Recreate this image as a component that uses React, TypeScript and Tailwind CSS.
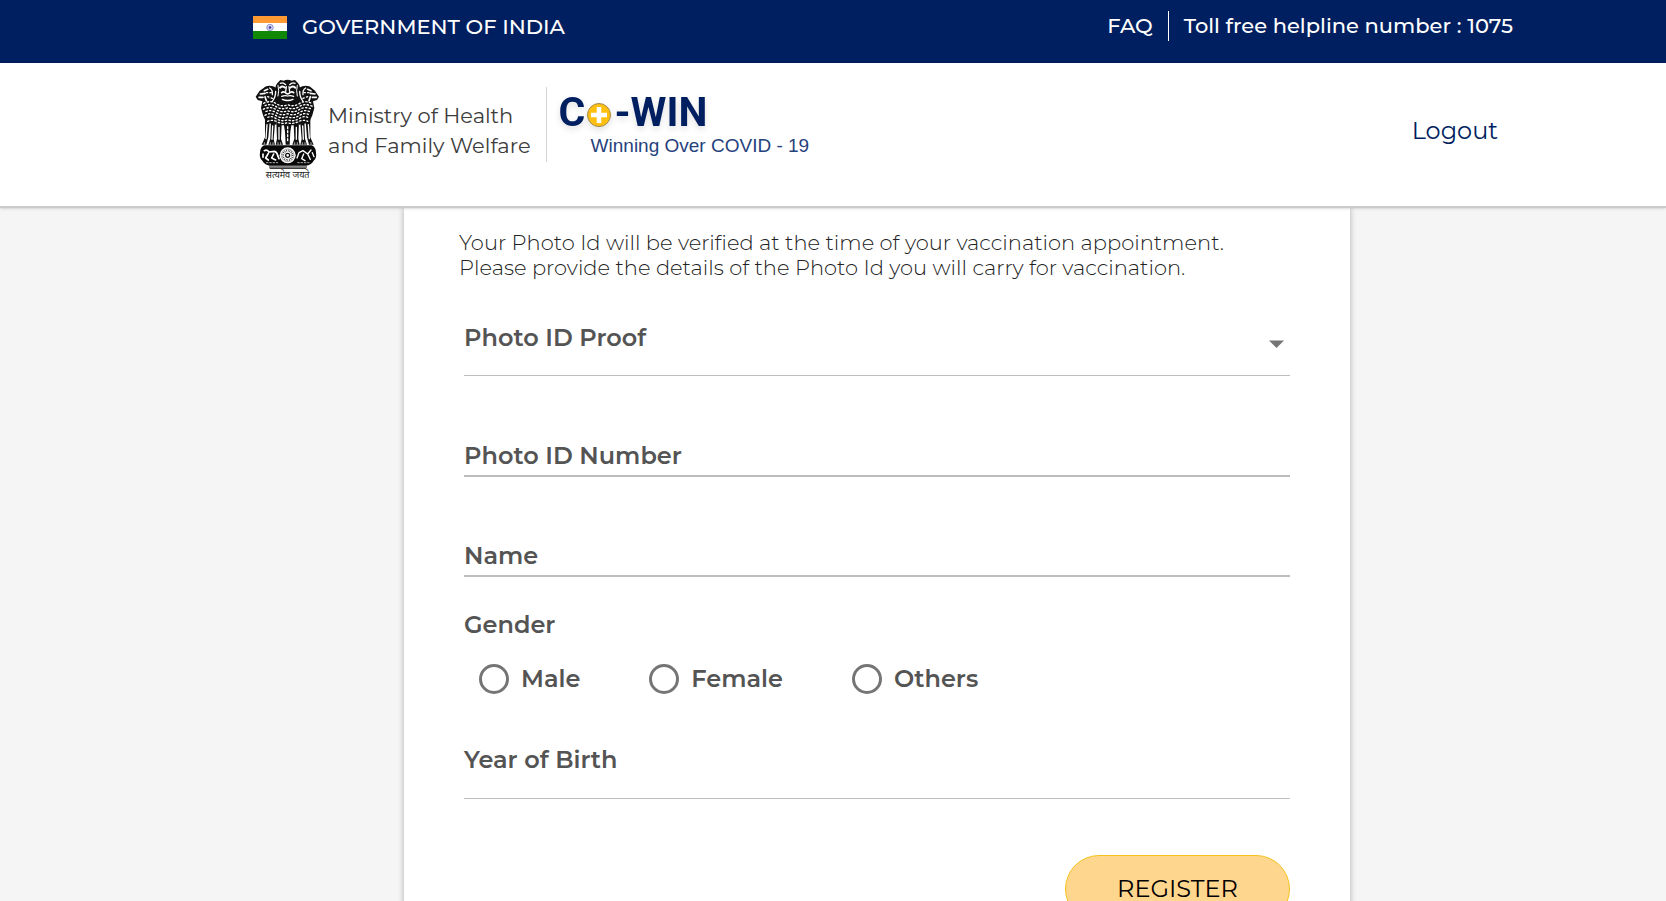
import { useState } from 'react'

const GENDERS = ['Male', 'Female', 'Others']

function IndiaFlag() {
  return (
    <svg width="34" height="23" viewBox="0 0 34 23" role="img" aria-label="India flag">
      <rect width="34" height="8" fill="#ff9933" />
      <rect y="7" width="34" height="9" fill="#fff" />
      <rect y="15" width="34" height="8" fill="#128807" />
      <circle cx="17" cy="11.5" r="3.6" fill="#d3d3f0" />
      <circle cx="17" cy="11.5" r="3.2" fill="none" stroke="#8888c8" strokeWidth="0.8" />
      <circle cx="17" cy="11.5" r="1.3" fill="#3a3aa0" />
    </svg>
  )
}

function Emblem() {
  return (
    <svg width="64" height="104" viewBox="28 25 192 312" role="img" aria-label="State emblem of India">
      {/* side lions */}
      <path
        d="M92 52 C78 42 62 44 54 52 L42 60 L30 78 L36 88 L50 92 L46 112 L52 134 L62 156 L92 162 L98 120 Z M160 52 C174 42 190 44 198 52 L208 60 L220 78 L214 88 L202 92 L206 112 L200 134 L190 156 L160 162 L154 120 Z"
        fill="#111"
      />
      {/* central lion */}
      <path
        d="M96 36 L104 28 L114 30 Q126 24 138 30 L148 28 L156 36 Q166 46 162 60 L160 82 Q176 100 170 130 L154 164 L98 164 L82 130 Q76 100 92 82 L90 60 Q86 46 96 36 Z"
        fill="#111"
      />
      {/* legs */}
      <path
        d="M58 146 L72 154 L68 200 L62 222 H48 L58 200 Z M76 152 L88 158 L84 206 L88 222 H68 L74 204 Z M92 154 L108 162 L106 204 L112 222 H90 L94 204 Z M114 158 H138 L134 184 L132 222 H120 L118 184 Z M160 154 L144 162 L146 204 L140 222 H162 L158 204 Z M176 152 L164 158 L168 206 L164 222 H184 L178 204 Z M194 146 L180 154 L184 200 L190 222 H204 L194 200 Z"
        fill="#111"
      />
      <g stroke="#fff" fill="none" strokeLinecap="round" strokeLinejoin="round">
        {/* central face */}
        <path d="M104 38 Q112 34 120 42 M148 38 Q140 34 132 42" strokeWidth="4" />
        <path d="M103 51 Q111 44 118 51 M149 51 Q141 44 134 51" strokeWidth="6" />
        <path d="M122 48 L120 62 M130 48 L132 62" strokeWidth="4" />
        <path d="M108 66 Q114 60 122 68 Q126 71 130 68 Q138 60 144 66" strokeWidth="5" />
        <path d="M108 77 Q118 73 126 76 Q134 73 144 77" strokeWidth="4" />
        <path d="M110 86 Q126 93 142 86" strokeWidth="4" />
        <path d="M97 44 L99 60 L97 76 M155 44 L153 60 L155 76" strokeWidth="3" />
        {/* side faces */}
        <path d="M56 60 L66 56 M44 70 L58 68 M40 80 H52 M58 78 L62 90 M196 60 L186 56 M208 70 L194 68 M212 80 H200 M194 78 L190 90" strokeWidth="5" />
        <path d="M72 52 Q82 58 80 72 M180 52 Q170 58 172 72" strokeWidth="4" />
        <path d="M90 62 Q90 80 80 92 M162 62 Q162 80 172 92" strokeWidth="4" />
        {/* manes */}
        <g strokeWidth="4" strokeDasharray="4 7">
          <path d="M66 78 L82 84 M186 78 L170 84 M62 66 H78 M190 66 H174" />
          <path d="M54 98 Q74 88 90 98 Q108 110 126 102 Q144 110 162 98 Q178 88 198 98" />
          <path d="M52 107 Q74 97 90 107 Q108 119 126 111 Q144 119 162 107 Q178 97 200 107" strokeDashoffset="5" />
          <path d="M53 116 Q74 106 90 116 Q108 128 126 120 Q144 128 162 116 Q178 106 199 116" />
          <path d="M55 125 Q74 115 90 125 Q108 137 126 129 Q144 137 162 125 Q178 115 197 125" strokeDashoffset="5" />
          <path d="M58 134 Q74 124 90 134 Q108 146 126 138 Q144 146 162 134 Q178 124 194 134" />
          <path d="M61 143 Q74 133 90 143 Q108 155 126 147 Q144 155 162 143 Q178 133 191 143" strokeDashoffset="5" />
          <path d="M66 152 Q78 146 92 152 Q110 162 126 156 Q142 162 160 152 Q174 146 186 152" />
        </g>
        {/* leg shading */}
        <path d="M64 162 L61 204 M81 166 L79 206 M100 170 V206 M152 170 V206 M171 166 L173 206 M188 162 L191 204" strokeWidth="4" />
        <path d="M126 168 V212" strokeWidth="4" strokeDasharray="6 6" />
        <path d="M56 216 V221 M74 216 V221 M82 216 V221 M97 216 V221 M105 216 V221 M147 216 V221 M155 216 V221 M170 216 V221 M178 216 V221 M196 216 V221" strokeWidth="2" />
      </g>
      {/* abacus */}
      <path d="M56 224 H198 Q210 228 211 246 Q214 262 204 270 Q198 282 182 285 H72 Q56 282 50 270 Q40 262 43 246 Q44 228 56 224 Z" fill="#080808" />
      <path d="M70 289 H184 M72 293 H182" stroke="#111" strokeWidth="3" />
      <circle cx="126" cy="254" r="24" fill="#fff" />
      <circle cx="126" cy="254" r="19" fill="none" stroke="#555" strokeWidth="1.5" />
      <circle cx="126" cy="254" r="14" fill="none" stroke="#222" strokeWidth="6" strokeDasharray="2 3" />
      <circle cx="126" cy="254" r="6" fill="#fff" stroke="#111" strokeWidth="4" />
      <g stroke="#fff" fill="none" strokeLinecap="round" strokeLinejoin="round">
        <path d="M56 240 Q64 236 70 244 L86 242 Q94 244 96 254 L100 264 M68 248 L60 262 L68 268 M84 250 L78 262 L90 268 M52 250 V260" strokeWidth="5" />
        <path d="M196 238 L186 250 L172 240 L160 246 L154 262 M186 250 L194 266 M174 250 L168 264 L178 270 M200 246 L205 258" strokeWidth="4" />
        <path d="M62 276 H96 M156 276 H190" strokeWidth="2" strokeDasharray="5 5" />
      </g>
      <text x="126" y="322" textAnchor="middle" fontSize="27" fill="#222" className="font-['Noto_Sans_Devanagari','Noto_Sans',sans-serif]">
        सत्यमेव जयते
      </text>
    </svg>
  )
}

function CowinLogo() {
  return (
    <a href="#home" className="flex flex-col text-[#001f60]">
      <span className="flex items-center font-['Roboto',sans-serif] text-[41px] leading-[43px] font-bold drop-shadow-md">
        C
        <svg width="26" height="26" viewBox="0 0 26 26" className="mt-1 ml-px" aria-hidden="true">
          <circle cx="13" cy="13" r="11.5" fill="#ffc010" stroke="#a08a50" strokeWidth="1" />
          <path d="M13 5 V21 M5 13 H21" stroke="#fff" strokeWidth="4.5" />
        </svg>
        <span className="ml-0.5">-WIN</span>
      </span>
      <span className="pl-8 font-['Liberation_Sans',sans-serif] text-[19px] leading-[24px] text-[#26427c]">
        Winning Over COVID - 19
      </span>
    </a>
  )
}

type TextFieldProps = {
  id: string
  label: string
  value: string
  onChange: (value: string) => void
}

function TextField({ id, label, value, onChange }: TextFieldProps) {
  return (
    <div className="flex items-center border-b-2 border-[#bdbdbd] pb-[3px]">
      <label htmlFor={id} className="pr-4">{label}</label>
      <input
        id={id}
        type="text"
        value={value}
        onChange={(e) => onChange(e.target.value)}
        className="min-w-0 flex-1 bg-transparent outline-none"
      />
    </div>
  )
}

export default function App() {
  const [proof, setProof] = useState('')
  const [idNumber, setIdNumber] = useState('')
  const [name, setName] = useState('')
  const [gender, setGender] = useState('')
  const [year, setYear] = useState('')

  return (
    <div className="flex h-screen flex-col bg-[#f5f5f5] font-['Montserrat','Inter',sans-serif]">
      {/* Top bar */}
      <div className="flex h-[63px] shrink-0 items-start justify-between bg-[#001f60] pt-[11px] pr-[153px] pl-[253px] text-[21px] leading-[30px] font-medium text-white">
        <div className="flex items-center gap-[15px] pt-px">
          <IndiaFlag />
          <span>GOVERNMENT OF INDIA</span>
        </div>
        <div className="flex items-center">
          <a href="#faq" className="border-r border-white pr-[15px]">FAQ</a>
          <span className="pl-[15px]">Toll free helpline number : 1075</span>
        </div>
      </div>

      {/* Header */}
      <header className="z-10 flex shrink-0 items-start justify-between border-b-2 border-[#cacaca] bg-white pt-4 pr-[168px] pb-[23px] pl-[255px] shadow-sm">
        <div className="flex items-start">
          <Emblem />
          <p className="pt-[22px] pl-[9px] text-[21px] leading-[30px] text-[#3c3c3c]">
            Ministry of Health
            <br />
            and Family Welfare
          </p>
          <div className="mt-2 ml-[15px] h-[75px] border-l border-[#d4d4d4] pt-1 pl-3">
            <CowinLogo />
          </div>
        </div>
        <a href="#logout" className="pt-9 text-2xl text-[#001f60]">Logout</a>
      </header>

      {/* Registration form */}
      <main className="flex-1 overflow-y-auto pr-[316px] pl-[404px] [scrollbar-width:none]">
        <div className="bg-white pb-16 shadow-[0_0_6px_rgba(0,0,0,0.3)]">
          <p className="px-[55px] pt-[22px] text-[21px] leading-[25px] font-light text-[#222]">
            Your Photo Id will be verified at the time of your vaccination appointment.
            <br />
            Please provide the details of the Photo Id you will carry for vaccination.
          </p>

          <form
            className="px-[60px] pt-[42px] text-2xl leading-8 font-semibold text-[#545454]"
            onSubmit={(e) => e.preventDefault()}
          >
            <div className="flex items-center border-b border-[#bdbdbd] pb-[21px]">
              <label htmlFor="proof" className="pr-4">Photo ID Proof</label>
              <select
                id="proof"
                value={proof}
                onChange={(e) => setProof(e.target.value)}
                className="h-8 min-w-0 flex-1 appearance-none bg-transparent outline-none"
              >
                <option value=""></option>
                <option value="aadhaar">Aadhaar Card</option>
                <option value="pan">PAN Card</option>
                <option value="passport">Passport</option>
              </select>
              <svg width="15" height="8" viewBox="0 0 15 8" className="mt-3 mr-1.5" aria-hidden="true">
                <path d="M0 0.5 H15 L7.5 8 Z" fill="#757575" />
              </svg>
            </div>

            <div className="flex flex-col gap-[63px] pt-16">
              <TextField id="id-number" label="Photo ID Number" value={idNumber} onChange={setIdNumber} />
              <TextField id="name" label="Name" value={name} onChange={setName} />
            </div>

            <fieldset className="pt-8">
              <legend className="float-left">Gender</legend>
              <div className="clear-both flex gap-[69px] pt-[22px] pl-[15px]">
                {GENDERS.map((g) => (
                  <label key={g} className="flex items-center gap-3">
                    <input
                      type="radio"
                      name="gender"
                      value={g}
                      checked={gender === g}
                      onChange={() => setGender(g)}
                      className="size-[30px] appearance-none rounded-full border-3 border-[#757575] checked:bg-[#001f60] checked:bg-clip-content checked:p-1"
                    />
                    {g}
                  </label>
                ))}
              </div>
            </fieldset>

            <div className="mt-[49px] flex items-center border-b border-[#bdbdbd] pb-[22px]">
              <label htmlFor="year" className="pr-4">Year of Birth</label>
              <input
                id="year"
                type="text"
                inputMode="numeric"
                value={year}
                onChange={(e) => setYear(e.target.value)}
                className="min-w-0 flex-1 bg-transparent outline-none"
              />
            </div>

            <div className="flex justify-end pt-14">
              <button
                type="submit"
                className="h-[68px] w-[225px] rounded-full border border-[#f5c21b] bg-[#ffd68e] text-2xl font-normal text-black"
              >
                REGISTER
              </button>
            </div>
          </form>
        </div>
      </main>
    </div>
  )
}
